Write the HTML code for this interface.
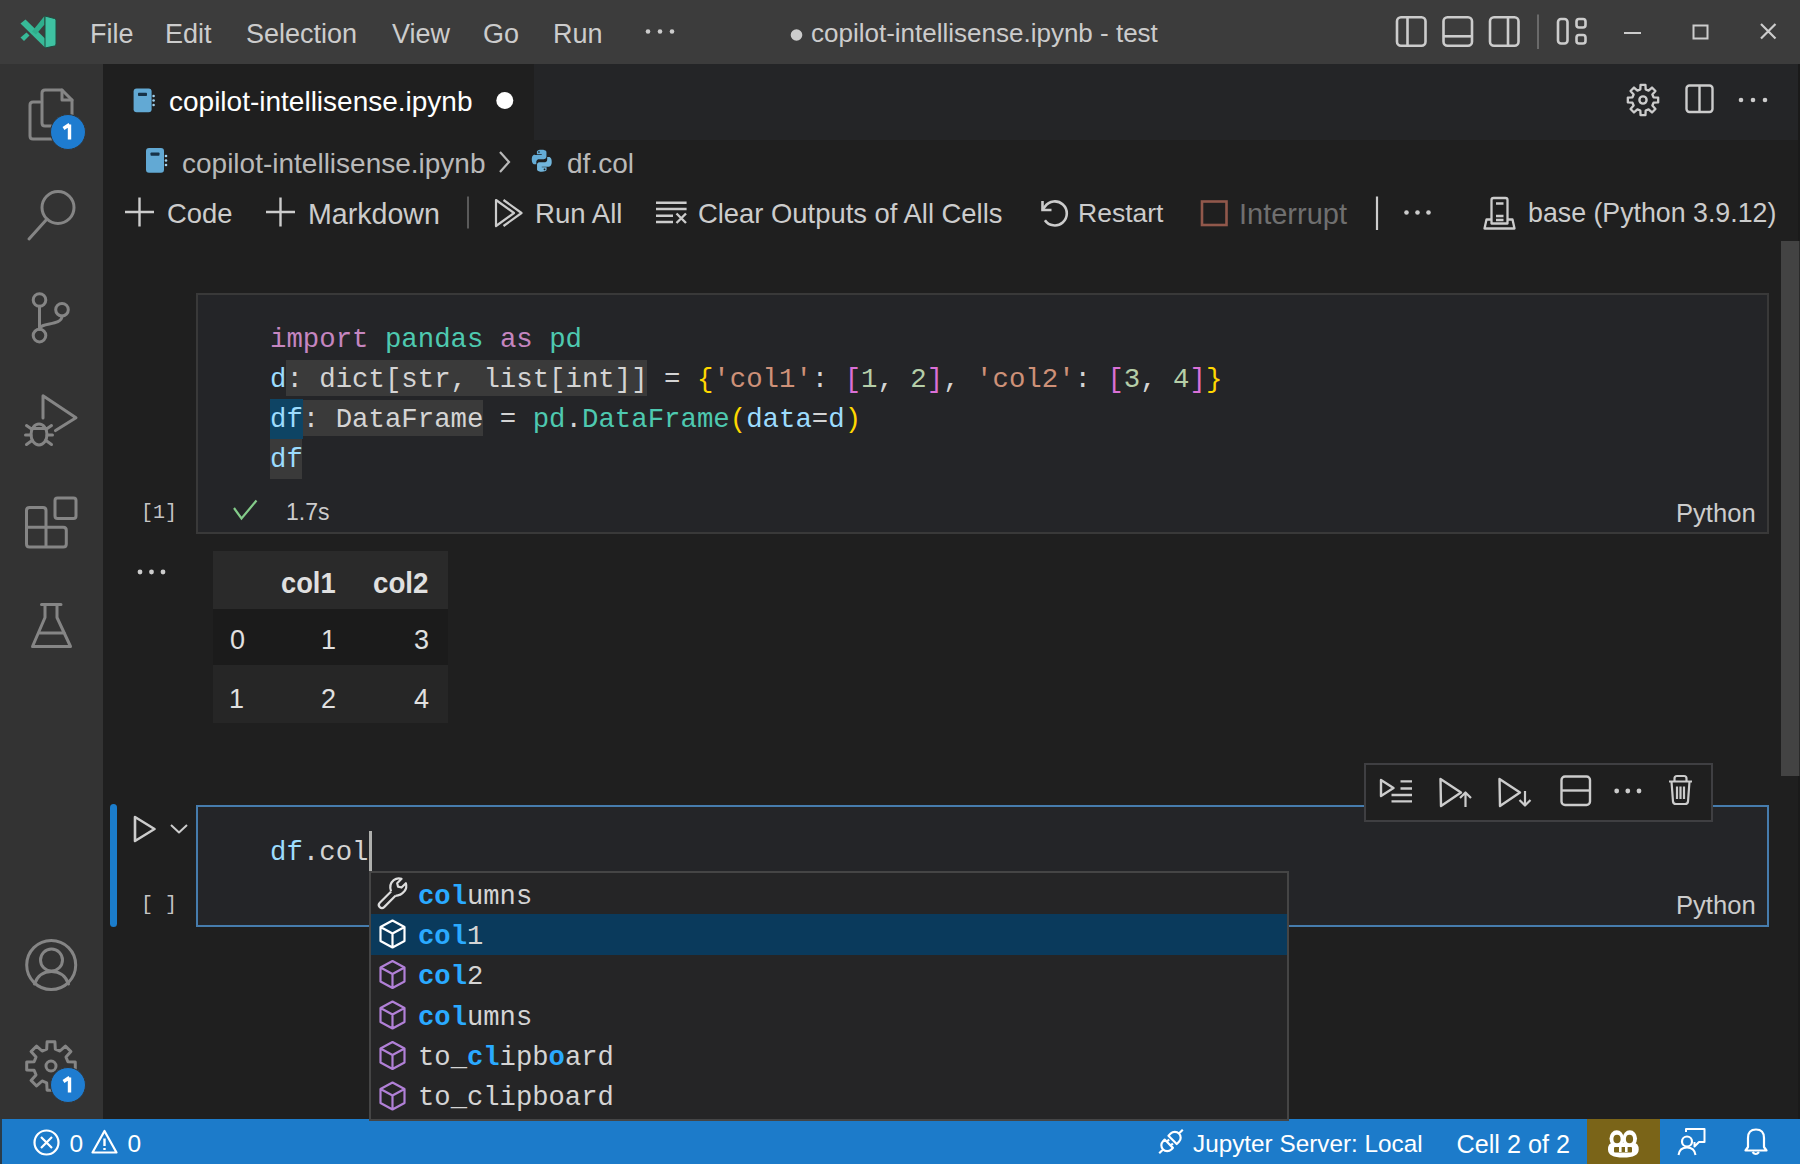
<!DOCTYPE html>
<html><head><meta charset="utf-8">
<style>
*{margin:0;padding:0;box-sizing:border-box}
html,body{width:1800px;height:1164px;overflow:hidden;background:#1f1f1f;font-family:"Liberation Sans",sans-serif;color:#cccccc}
.a{position:absolute}
.t{position:absolute;white-space:pre;line-height:1}
.m{font-family:"Liberation Mono",monospace}
svg{position:absolute;overflow:visible}
</style></head><body>


<!-- TITLE BAR -->
<div class="a" style="left:0;top:0;width:1800px;height:64px;background:#3c3c3c"></div>
<svg style="left:0;top:0" width="70" height="64">
 <path d="M20.5 23.5 L25.5 19.5 L45 38.5 L45 47.5 Z" fill="#37ba98"/>
 <path d="M32 31.5 L44.5 16 L44.5 24.5 L36 34.5 Z" fill="#2fae8c"/>
 <path d="M20.5 37.5 L26.5 32.5 L29.5 35.5 L24 41 Z" fill="#37ba98"/>
 <path d="M45 16 L54.5 18.5 Q56 19 56 20.5 V44 Q56 45.5 54.5 46 L45 48 Z" fill="#3ec2a2" stroke="#1f4a3e" stroke-width="1"/>
</svg>
<div class="t" style="left:90px;top:20.5px;font-size:27px;color:#cccccc">File</div>
<div class="t" style="left:165px;top:20.5px;font-size:27px;color:#cccccc">Edit</div>
<div class="t" style="left:246px;top:20.5px;font-size:27px;color:#cccccc">Selection</div>
<div class="t" style="left:392px;top:20.5px;font-size:27px;color:#cccccc">View</div>
<div class="t" style="left:483px;top:20.5px;font-size:27px;color:#cccccc">Go</div>
<div class="t" style="left:553px;top:20.5px;font-size:27px;color:#cccccc">Run</div>
<svg style="left:640px;top:20px" width="40" height="24"><circle cx="8" cy="11.5" r="2.3" fill="#cccccc"/><circle cx="20" cy="11.5" r="2.3" fill="#cccccc"/><circle cx="32" cy="11.5" r="2.3" fill="#cccccc"/></svg>
<svg style="left:785px;top:25px" width="20" height="20"><circle cx="11.5" cy="10" r="5.8" fill="#cccccc"/></svg>
<div class="t" style="left:811px;top:20px;font-size:26px;color:#cccccc">copilot-intellisense.ipynb - test</div>
<svg style="left:1380px;top:0" width="420" height="64" fill="none" stroke="#cccccc" stroke-width="2.6">
 <rect x="17" y="17.3" width="28.5" height="28.5" rx="4"/><line x1="27.5" y1="17.3" x2="27.5" y2="45.8"/>
 <rect x="63.5" y="17.3" width="28.5" height="28.5" rx="4"/><line x1="63.5" y1="36.3" x2="92" y2="36.3"/>
 <rect x="110" y="17.3" width="28.5" height="28.5" rx="4"/><line x1="128" y1="17.3" x2="128" y2="45.8"/>
 <line x1="158" y1="14.5" x2="158" y2="49" stroke="#6a6a6a" stroke-width="2"/>
 <rect x="178" y="19" width="9.5" height="24.5" rx="3"/><rect x="196.5" y="19" width="9" height="8.5" rx="2.5"/><rect x="196.5" y="35" width="9" height="8.5" rx="2.5"/>
 <line x1="244" y1="33" x2="261" y2="33" stroke-width="2"/>
 <rect x="313.5" y="25.5" width="14" height="13" stroke-width="2"/>
 <path d="M381 24 L395.5 38.5 M395.5 24 L381 38.5" stroke-width="2.2"/>
</svg>


<!-- ACTIVITY BAR -->
<div class="a" style="left:0;top:64px;width:103px;height:1055px;background:#333333"></div>
<svg style="left:0;top:64px" width="102" height="1055" fill="none" stroke="#858585" stroke-width="3" stroke-linejoin="round" stroke-linecap="round">
 <!-- explorer -->
 <path d="M40 38 H33 Q30 38 30 41 V72 Q30 75 33 75 H52"/>
 <path d="M45 26 H62 L72 36 V62 H45 Q42 62 42 59 V29 Q42 26 45 26 Z"/><path d="M62 26 V36 H72"/>
 <!-- search -->
 <circle cx="58" cy="143.5" r="16"/><line x1="47" y1="155" x2="29" y2="175"/>
 <!-- scm -->
 <circle cx="39.5" cy="236" r="6.3"/><circle cx="62" cy="245.7" r="6.3"/><circle cx="39.5" cy="271.6" r="6.3"/>
 <line x1="39.5" y1="242.3" x2="39.5" y2="265.3"/><path d="M62 252 C62 262 40 258 39.5 265"/>
 <!-- debug -->
 <path d="M43 354 V331.8 L76 353.7 L55.5 366.6"/>
 <ellipse cx="39" cy="370.5" rx="8" ry="10.5"/><path d="M31.5 364.5 H46.5 M26.5 361.5 L31.5 365 M51.5 361.5 L46.5 365 M25.5 371 H31 M47 371 H52.5 M26.5 380.5 L32 376.5 M51.5 380.5 L46 376.5"/>
 <!-- extensions -->
 <path d="M29.5 443.5 H43 Q46 443.5 46 446.5 V463.3 H63.3 Q66.3 463.3 66.3 466.3 V480 Q66.3 483 63.3 483 H29.5 Q26.5 483 26.5 480 V446.5 Q26.5 443.5 29.5 443.5 Z M26.5 463.3 H46 V483"/>
 <rect x="55" y="434" width="21" height="20.5" rx="2.5"/>
 <!-- testing -->
 <path d="M41.5 540.5 H61 M45 540.5 V553.5 L32.5 582.5 H70.5 L57 553.5 V540.5 M38.5 569 H64.5"/>
 <!-- account -->
 <circle cx="51.2" cy="901" r="24.5"/><circle cx="51.5" cy="896" r="11"/><path d="M34.5 920 C38 910 44 907.5 51.5 907.5 C59 907.5 65 910 68.5 920"/>
 <!-- settings gear -->
 <path transform="translate(51,1002) scale(2.05)" stroke-width="1.45" d="M8.24 -2.10 L11.85 -1.91 L11.85 1.91 L8.24 2.10 L7.31 4.34 L9.73 7.03 L7.03 9.73 L4.34 7.31 L2.10 8.24 L1.91 11.85 L-1.91 11.85 L-2.10 8.24 L-4.34 7.31 L-7.03 9.73 L-9.73 7.03 L-7.31 4.34 L-8.24 2.10 L-11.85 1.91 L-11.85 -1.91 L-8.24 -2.10 L-7.31 -4.34 L-9.73 -7.03 L-7.03 -9.73 L-4.34 -7.31 L-2.10 -8.24 L-1.91 -11.85 L1.91 -11.85 L2.10 -8.24 L4.34 -7.31 L7.03 -9.73 L9.73 -7.03 L7.31 -4.34 Z"/>
 <circle cx="51" cy="1002" r="5"/>
</svg>
<svg style="left:0;top:64px" width="102" height="1055">
 <circle cx="68" cy="68" r="17.5" fill="#1e7cd0" stroke="#333333" stroke-width="1"/>
 <path d="M69.5 60.5 V75.5 M63.5 64.5 L69.5 60.5" stroke="#ffffff" stroke-width="3.4" fill="none" stroke-linejoin="round"/>
 <circle cx="68" cy="1021" r="17.5" fill="#1e7cd0" stroke="#333333" stroke-width="1"/>
 <path d="M69.5 1013.5 V1028.5 M63.5 1017.5 L69.5 1013.5" stroke="#ffffff" stroke-width="3.4" fill="none" stroke-linejoin="round"/>
</svg>

<!-- TAB BAR -->
<div class="a" style="left:103px;top:64px;width:1697px;height:76px;background:#242527"></div>
<div class="a" style="left:103px;top:64px;width:431px;height:76px;background:#1f1f1f"></div>
<svg style="left:130px;top:86px" width="28" height="30">
 <rect x="3.6" y="2.6" width="18" height="23.6" rx="3" fill="#62a9d4"/>
 <rect x="8" y="6.8" width="9" height="3.2" rx="0.8" fill="#173247"/>
 <circle cx="23.6" cy="10" r="1.3" fill="#9fd0ee"/><circle cx="23.6" cy="14.5" r="1.3" fill="#9fd0ee"/><circle cx="23.6" cy="19" r="1.3" fill="#9fd0ee"/>
</svg>
<div class="t" style="left:169px;top:87.5px;font-size:28px;color:#ffffff">copilot-intellisense.ipynb</div>
<svg style="left:490px;top:90px" width="24" height="24"><circle cx="14.8" cy="10.6" r="8.5" fill="#ffffff"/></svg>
<svg style="left:1600px;top:64px" width="200" height="73" fill="none" stroke="#cccccc" stroke-width="2.4" stroke-linejoin="round">
 <path transform="translate(43,36) scale(1.28)" stroke-width="1.8" d="M8.24 -2.10 L11.85 -1.91 L11.85 1.91 L8.24 2.10 L7.31 4.34 L9.73 7.03 L7.03 9.73 L4.34 7.31 L2.10 8.24 L1.91 11.85 L-1.91 11.85 L-2.10 8.24 L-4.34 7.31 L-7.03 9.73 L-9.73 7.03 L-7.31 4.34 L-8.24 2.10 L-11.85 1.91 L-11.85 -1.91 L-8.24 -2.10 L-7.31 -4.34 L-9.73 -7.03 L-7.03 -9.73 L-4.34 -7.31 L-2.10 -8.24 L-1.91 -11.85 L1.91 -11.85 L2.10 -8.24 L4.34 -7.31 L7.03 -9.73 L9.73 -7.03 L7.31 -4.34 Z"/>
 <circle cx="43" cy="36" r="3.6"/>
 <rect x="86.5" y="21.5" width="26" height="26.5" rx="3"/><line x1="99.5" y1="21.5" x2="99.5" y2="48"/>
 <circle cx="141" cy="36" r="2.3" fill="#cccccc" stroke="none"/><circle cx="153" cy="36" r="2.3" fill="#cccccc" stroke="none"/><circle cx="165" cy="36" r="2.3" fill="#cccccc" stroke="none"/>
</svg>

<!-- BREADCRUMB -->
<svg style="left:141px;top:146px" width="32" height="30">
 <rect x="5" y="2" width="18" height="24.8" rx="3" fill="#62a9d4"/>
 <rect x="9.5" y="6.5" width="9" height="3.2" rx="0.8" fill="#173247"/>
 <circle cx="25" cy="10" r="1.3" fill="#9fd0ee"/><circle cx="25" cy="14.5" r="1.3" fill="#9fd0ee"/><circle cx="25" cy="19" r="1.3" fill="#9fd0ee"/>
</svg>
<div class="t" style="left:182px;top:149.5px;font-size:28px;color:#b9b9b9">copilot-intellisense.ipynb</div>
<svg style="left:495px;top:148px" width="20" height="28"><path d="M5 4 L14 14 L5 24" fill="none" stroke="#b9b9b9" stroke-width="2.2"/></svg>
<svg style="left:530px;top:149px" width="23.5" height="23.5" viewBox="0 0 16 16">
 <path fill="#64acd6" d="M7.9 0.5c-3.4 0-3.2 1.5-3.2 1.5v1.5h3.3v0.5H3.4S1.2 3.7 1.2 7.1s1.9 3.3 1.9 3.3h1.2V8.8s-0.1-1.9 1.9-1.9h3.2s1.8 0 1.8-1.8V2.2S11.5 0.5 7.9 0.5zM6.1 1.5c0.3 0 0.6 0.3 0.6 0.6s-0.3 0.6-0.6 0.6-0.6-0.3-0.6-0.6 0.3-0.6 0.6-0.6z"/>
 <path fill="#72b6dc" d="M8.1 15.5c3.4 0 3.2-1.5 3.2-1.5v-1.5H8v-0.5h4.6s2.2 0.2 2.2-3.2-1.9-3.3-1.9-3.3h-1.2v1.6s0.1 1.9-1.9 1.9H6.6s-1.8 0-1.8 1.8v3s-0.3 1.7 3.3 1.7zm1.8-1c-0.3 0-0.6-0.3-0.6-0.6s0.3-0.6 0.6-0.6 0.6 0.3 0.6 0.6-0.3 0.6-0.6 0.6z"/>
</svg>
<div class="t" style="left:567px;top:149.5px;font-size:28px;color:#b9b9b9">df.col</div>

<!-- NOTEBOOK TOOLBAR -->
<svg style="left:110px;top:185px" width="1700" height="56" fill="none" stroke="#cccccc" stroke-width="2.4">
 <path d="M15 27 H44 M29.5 12.5 V41.5"/>
 <path d="M156 27 H185 M170.5 12.5 V41.5"/>
 <line x1="358" y1="11.5" x2="358" y2="43.5" stroke="#5a5a5a" stroke-width="2"/>
 <path d="M386 15 L404 28 L386 41 Z M393.5 15 L411.5 28 L393.5 41" stroke-linejoin="round" stroke-width="2.2"/>
 <path d="M546 17.8 H576.6 M546 24 H576.6 M546 30.7 H563 M546 37 H563 M566.5 28.5 L576 38 M576 28.5 L566.5 38" stroke-width="2.4"/>
 <path d="M932.5 25 L935 21.5 A12 12 0 1 1 934.9 35.2" stroke-width="2.6"/><path d="M932.5 16 V25 H941.5" stroke-width="2.6"/>
 <rect x="1092" y="16.5" width="24.5" height="23.5" stroke="#91584b" stroke-width="2.6"/>
 <line x1="1267" y1="11.5" x2="1267" y2="45" stroke="#cccccc" stroke-width="2.2"/>
 <circle cx="1296.5" cy="27.5" r="2.3" fill="#cccccc" stroke="none"/><circle cx="1307.5" cy="27.5" r="2.3" fill="#cccccc" stroke="none"/><circle cx="1318.5" cy="27.5" r="2.3" fill="#cccccc" stroke="none"/>
 <path d="M1383.5 13 H1395.5 Q1397.5 13 1397.5 15 V38.5 H1381.5 V15 Q1381.5 13 1383.5 13 Z M1386 18.5 H1393.5 M1386 31 H1393.5 M1386 35 H1393.5 M1381.5 34.5 H1376.5 L1374.5 43.5 H1404.5 L1402.5 34.5 H1397.5" stroke-width="2.3" stroke-linejoin="round"/>
</svg>
<div class="t" style="left:167px;top:200px;font-size:27.4px;color:#cccccc">Code</div>
<div class="t" style="left:308px;top:200px;font-size:28.6px;color:#cccccc">Markdown</div>
<div class="t" style="left:535px;top:200px;font-size:27.6px;color:#cccccc">Run All</div>
<div class="t" style="left:698px;top:200px;font-size:27.4px;color:#cccccc">Clear Outputs of All Cells</div>
<div class="t" style="left:1078px;top:200px;font-size:26.5px;color:#cccccc">Restart</div>
<div class="t" style="left:1239px;top:200px;font-size:29px;color:#6f6f6f">Interrupt</div>
<div class="t" style="left:1528px;top:200px;font-size:26.75px;color:#cccccc">base (Python 3.9.12)</div>

<!-- CELL 1 -->
<div class="a" style="left:196px;top:293px;width:1573px;height:241px;background:#242528;border:2px solid #393939"></div>
<div class="a" style="left:286.4px;top:359.6px;width:360.6px;height:36.4px;background:#3a3a3a"></div>
<div class="a" style="left:303px;top:399.5px;width:180.2px;height:36px;background:#3a3a3a"></div>
<div class="a" style="left:270.2px;top:399px;width:32.8px;height:40px;background:#0e4464"></div>
<div class="a" style="left:270.2px;top:439px;width:32.2px;height:40px;background:#3a3a3a"></div>
<div class="a m" style="left:270px;top:319.85px;font-size:27.36px;line-height:40.17px;white-space:pre;color:#d4d4d4"><div><span style="color:#c586c0">import</span> <span style="color:#4ec9b0">pandas</span> <span style="color:#c586c0">as</span> <span style="color:#4ec9b0">pd</span></div><div><span style="color:#9cdcfe">d</span>: dict[str, list[int]] = <span style="color:#ffd700">{</span><span style="color:#ce9178">'col1'</span>: <span style="color:#da70d6">[</span><span style="color:#b5cea8">1</span>, <span style="color:#b5cea8">2</span><span style="color:#da70d6">]</span>, <span style="color:#ce9178">'col2'</span>: <span style="color:#da70d6">[</span><span style="color:#b5cea8">3</span>, <span style="color:#b5cea8">4</span><span style="color:#da70d6">]</span><span style="color:#ffd700">}</span></div><div><span style="color:#9cdcfe">df</span>: DataFrame = <span style="color:#4ec9b0">pd</span>.<span style="color:#4ec9b0">DataFrame</span><span style="color:#ffd700">(</span><span style="color:#9cdcfe">data</span>=<span style="color:#9cdcfe">d</span><span style="color:#ffd700">)</span></div><div><span style="color:#9cdcfe">df</span></div></div>
<div class="t m" style="left:141px;top:503px;font-size:20px;color:#c5c5c5">[1]</div>
<svg style="left:228px;top:494px" width="36" height="32"><path d="M6 14 L13.5 24.5 L28.5 6.5" fill="none" stroke="#84cc8a" stroke-width="2.2"/></svg>
<div class="t" style="left:286px;top:501px;font-size:23px;color:#cccccc">1.7s</div>
<div class="t" style="left:1676px;top:500.5px;font-size:25.6px;color:#cccccc">Python</div>

<!-- OUTPUT -->
<svg style="left:130px;top:560px" width="40" height="24"><circle cx="10" cy="12" r="2.4" fill="#cccccc"/><circle cx="21.5" cy="12" r="2.4" fill="#cccccc"/><circle cx="33" cy="12" r="2.4" fill="#cccccc"/></svg>
<div class="a" style="left:213px;top:551px;width:235px;height:58px;background:#2a2a2a"></div>
<div class="a" style="left:213px;top:609px;width:235px;height:56px;background:#1b1b1b"></div>
<div class="a" style="left:213px;top:665px;width:235px;height:58px;background:#262626"></div>
<div class="t" style="left:281px;top:568px;font-size:29.5px;font-weight:700;color:#e0e0e0;transform:scaleX(0.925);transform-origin:0 0">col1</div>
<div class="t" style="left:373px;top:568px;font-size:29.5px;font-weight:700;color:#e0e0e0;transform:scaleX(0.94);transform-origin:0 0">col2</div>
<div class="t" style="left:230px;top:627px;font-size:27px;color:#e0e0e0">0</div>
<div class="t" style="left:321px;top:627px;font-size:27px;color:#e0e0e0">1</div>
<div class="t" style="left:414px;top:627px;font-size:27px;color:#e0e0e0">3</div>
<div class="t" style="left:229px;top:686px;font-size:27px;color:#e0e0e0">1</div>
<div class="t" style="left:321px;top:686px;font-size:27px;color:#e0e0e0">2</div>
<div class="t" style="left:414px;top:686px;font-size:27px;color:#e0e0e0">4</div>

<!-- CELL 2 -->
<div class="a" style="left:110px;top:804px;width:7px;height:123px;background:#1b7dcc;border-radius:4px"></div>
<svg style="left:120px;top:805px" width="80" height="50" fill="none" stroke="#cccccc" stroke-width="2.6" stroke-linejoin="round">
 <path d="M15 12 L34.5 24 L15 36 Z"/>
 <path d="M51 20 L59 27.5 L67 20" stroke-width="2"/>
</svg>
<div class="t m" style="left:141px;top:895px;font-size:20px;color:#c5c5c5">[ ]</div>
<div class="a" style="left:196px;top:805px;width:1573px;height:122px;background:#242528;border:2px solid #467cad"></div>
<div class="t m" style="left:270px;top:839px;font-size:27.36px;color:#d4d4d4"><span style="color:#9cdcfe">df</span>.col</div>
<div class="a" style="left:368.5px;top:830.5px;width:3px;height:40.5px;background:#aeafad"></div>
<div class="t" style="left:1676px;top:893px;font-size:25.6px;color:#cccccc">Python</div>

<!-- CELL TOOLBAR -->
<div class="a" style="left:1364px;top:763px;width:349px;height:59px;background:#1f1f1f;border:2px solid #3f3f42"></div>
<svg style="left:1364px;top:763px" width="349" height="59" fill="none" stroke="#cccccc" stroke-width="2.4" stroke-linejoin="round">
 <path d="M17 17 L29.5 25 L17 33 Z"/><path d="M36.5 18.4 H48 M36.5 25.5 H48 M27.5 32 H48 M27.5 38.4 H48" stroke-width="2.4"/>
 <path d="M76.5 16 L97 29.5 L77 43 Z"/><path d="M101.5 44 V30 M96 35 L101.5 29.5 L107 35" stroke-width="2.2"/>
 <path d="M135.5 16 L156 29.5 L136 43 Z"/><path d="M161 28 V42 M155.5 37 L161 42.5 L166.5 37" stroke-width="2.2"/>
 <rect x="197.5" y="13.5" width="28.5" height="28.5" rx="3.5"/><line x1="197.5" y1="27.5" x2="226" y2="27.5"/>
 <circle cx="252.7" cy="28" r="2.4" fill="#cccccc" stroke="none"/><circle cx="263.8" cy="28" r="2.4" fill="#cccccc" stroke="none"/><circle cx="275" cy="28" r="2.4" fill="#cccccc" stroke="none"/>
 <path d="M305 18.5 H328 M310.5 18.5 V15.5 Q310.5 13 313 13 H320 Q322.5 13 322.5 15.5 V18.5 M307.5 18.5 L309 38.5 Q309.3 41 312 41 H321 Q323.7 41 324 38.5 L325.5 18.5 M313 23.5 V36 M316.5 23.5 V36 M320 23.5 V36" stroke-width="2.2"/>
</svg>

<!-- SCROLLBAR -->
<div class="a" style="left:1781px;top:241px;width:18px;height:535px;background:#434343"></div>
<div class="a" style="left:1798px;top:64px;width:2px;height:177px;background:#1a1a1a"></div>
<div class="a" style="left:1798px;top:776px;width:2px;height:343px;background:#1a1a1a"></div>
<div class="a" style="left:1799px;top:241px;width:1px;height:535px;background:#2a2a2a"></div>

<!-- STATUS BAR -->
<div class="a" style="left:0;top:1119px;width:1800px;height:45px;background:#1c7bca"></div>
<div class="a" style="left:0;top:1119px;width:2px;height:45px;background:#2a3c4a"></div>
<div class="a" style="left:1587px;top:1119px;width:73px;height:45px;background:#7a6418"></div>
<svg style="left:0;top:1119px" width="1800" height="45" fill="none" stroke="#ffffff" stroke-width="2.2" stroke-linejoin="round">
 <circle cx="46.5" cy="23.5" r="12"/><path d="M41 18 L52 29 M52 18 L41 29"/>
 <path d="M104.5 12 L116.5 33.5 H92.5 Z"/><path d="M104.5 19.5 V27 M104.5 29 V31" stroke-width="2.4"/>
 <g transform="translate(1171,22.5) rotate(-45) scale(0.9)" stroke-width="2.4"><path d="M2.5 -6.5 H6 A6.5 6.5 0 0 1 6 6.5 H2.5 Z M12.5 0 H18.5"/><path d="M-3.5 -6.5 H-6 A6.5 6.5 0 0 0 -6 6.5 H-3.5 Z M-12.5 0 H-18.5 M-3.5 -3 H0 M-3.5 3 H0"/></g>
 <g stroke="none" fill="#ffffff">
  <path d="M1608 1149.5 Q1608 1143 1613 1142.5 L1633.5 1142.5 Q1638.7 1143 1638.7 1149.5 Q1638.7 1157.5 1623.3 1157.5 Q1608 1157.5 1608 1149.5 Z" transform="translate(0,-1119)"/>
  <ellipse cx="1616.7" cy="19.5" rx="7.2" ry="8.3"/><ellipse cx="1629.8" cy="19.5" rx="7.2" ry="8.3"/>
  <ellipse cx="1617" cy="20" rx="3.6" ry="4.3" fill="#7a6418"/><ellipse cx="1629.5" cy="20" rx="3.6" ry="4.3" fill="#7a6418"/>
  <rect x="1614" y="28" width="18" height="5.5" rx="1" fill="#7a6418"/>
  <rect x="1619" y="28" width="2.6" height="5" fill="#ffffff"/><rect x="1625" y="28" width="2.6" height="5" fill="#ffffff"/>
 </g>
 <path d="M1686 13 V10 H1704.5 V23 H1699 L1694.5 27.5 V23" stroke-width="2"/>
 <circle cx="1687" cy="22.5" r="5"/><path d="M1678.5 36 Q1679.5 28.5 1687 28.5 Q1694.5 28.5 1695.5 36" stroke-width="2"/>
 <path d="M1745.5 31.5 L1748 28 V19 Q1748 10.5 1756 10.5 Q1764 10.5 1764 19 V28 L1766.5 31.5 Z" stroke-width="2.2"/><path d="M1752.5 33 Q1755.8 37 1759 33" stroke-width="2.2"/>
</svg>
<div class="t" style="left:69.5px;top:1131.5px;font-size:24.5px;color:#ffffff">0</div>
<div class="t" style="left:127.5px;top:1131.5px;font-size:24.5px;color:#ffffff">0</div>
<div class="t" style="left:1193px;top:1132px;font-size:24.3px;color:#ffffff">Jupyter Server: Local</div>
<div class="t" style="left:1456.5px;top:1132px;font-size:25.2px;color:#ffffff">Cell 2 of 2</div>

<!-- SUGGEST WIDGET -->
<div class="a" style="left:369px;top:871px;width:920px;height:250px;background:#252526;border:2px solid #454545"></div>
<div class="a" style="left:371px;top:914px;width:916px;height:40.5px;background:#0a3a5c"></div>
<svg style="left:371px;top:873px" width="60" height="246" fill="none" stroke="#b180d7" stroke-width="2.2" stroke-linejoin="round">
 <path transform="translate(21.4,20.2) scale(0.87) translate(-23.5,-22)" stroke-width="2.5" stroke="#dddddd" d="M9 33 L22 20 M9 33 Q6.5 35.5 9 38 Q11.5 40.5 14 38 L27 25 M22 20 Q19 12 25 7 Q29 4 34 5.5 L29 10.5 L30 14.5 L34 15.5 L39 10.5 Q40.5 15.5 37.5 19.5 Q33 25 27 25"/>
 <g transform="translate(21.5,61)"><path stroke="#ffffff" d="M0 -13.5 L12 -7 V7 L0 13.5 L-12 7 V-7 Z M-12 -7 L0 -0.5 L12 -7 M0 -0.5 V13.5"/></g>
 <g transform="translate(21.5,101.5)"><path d="M0 -13.5 L12 -7 V7 L0 13.5 L-12 7 V-7 Z M-12 -7 L0 -0.5 L12 -7 M0 -0.5 V13.5"/></g>
 <g transform="translate(21.5,142)"><path d="M0 -13.5 L12 -7 V7 L0 13.5 L-12 7 V-7 Z M-12 -7 L0 -0.5 L12 -7 M0 -0.5 V13.5"/></g>
 <g transform="translate(21.5,182.5)"><path d="M0 -13.5 L12 -7 V7 L0 13.5 L-12 7 V-7 Z M-12 -7 L0 -0.5 L12 -7 M0 -0.5 V13.5"/></g>
 <g transform="translate(21.5,223)"><path d="M0 -13.5 L12 -7 V7 L0 13.5 L-12 7 V-7 Z M-12 -7 L0 -0.5 L12 -7 M0 -0.5 V13.5"/></g>
</svg>
<div class="a m" style="left:418px;top:877px;font-size:27.2px;line-height:40.2px;white-space:pre;color:#d4d4d4;font-weight:400"><div><b style="color:#2aaaff">col</b>umns</div><div><b style="color:#2aaaff">col</b>1</div><div><b style="color:#2aaaff">col</b>2</div><div><b style="color:#2aaaff">col</b>umns</div><div>to_<b style="color:#2aaaff">cl</b>ipb<b style="color:#2aaaff">o</b>ard</div><div>to_clipboard</div></div>

</body></html>
